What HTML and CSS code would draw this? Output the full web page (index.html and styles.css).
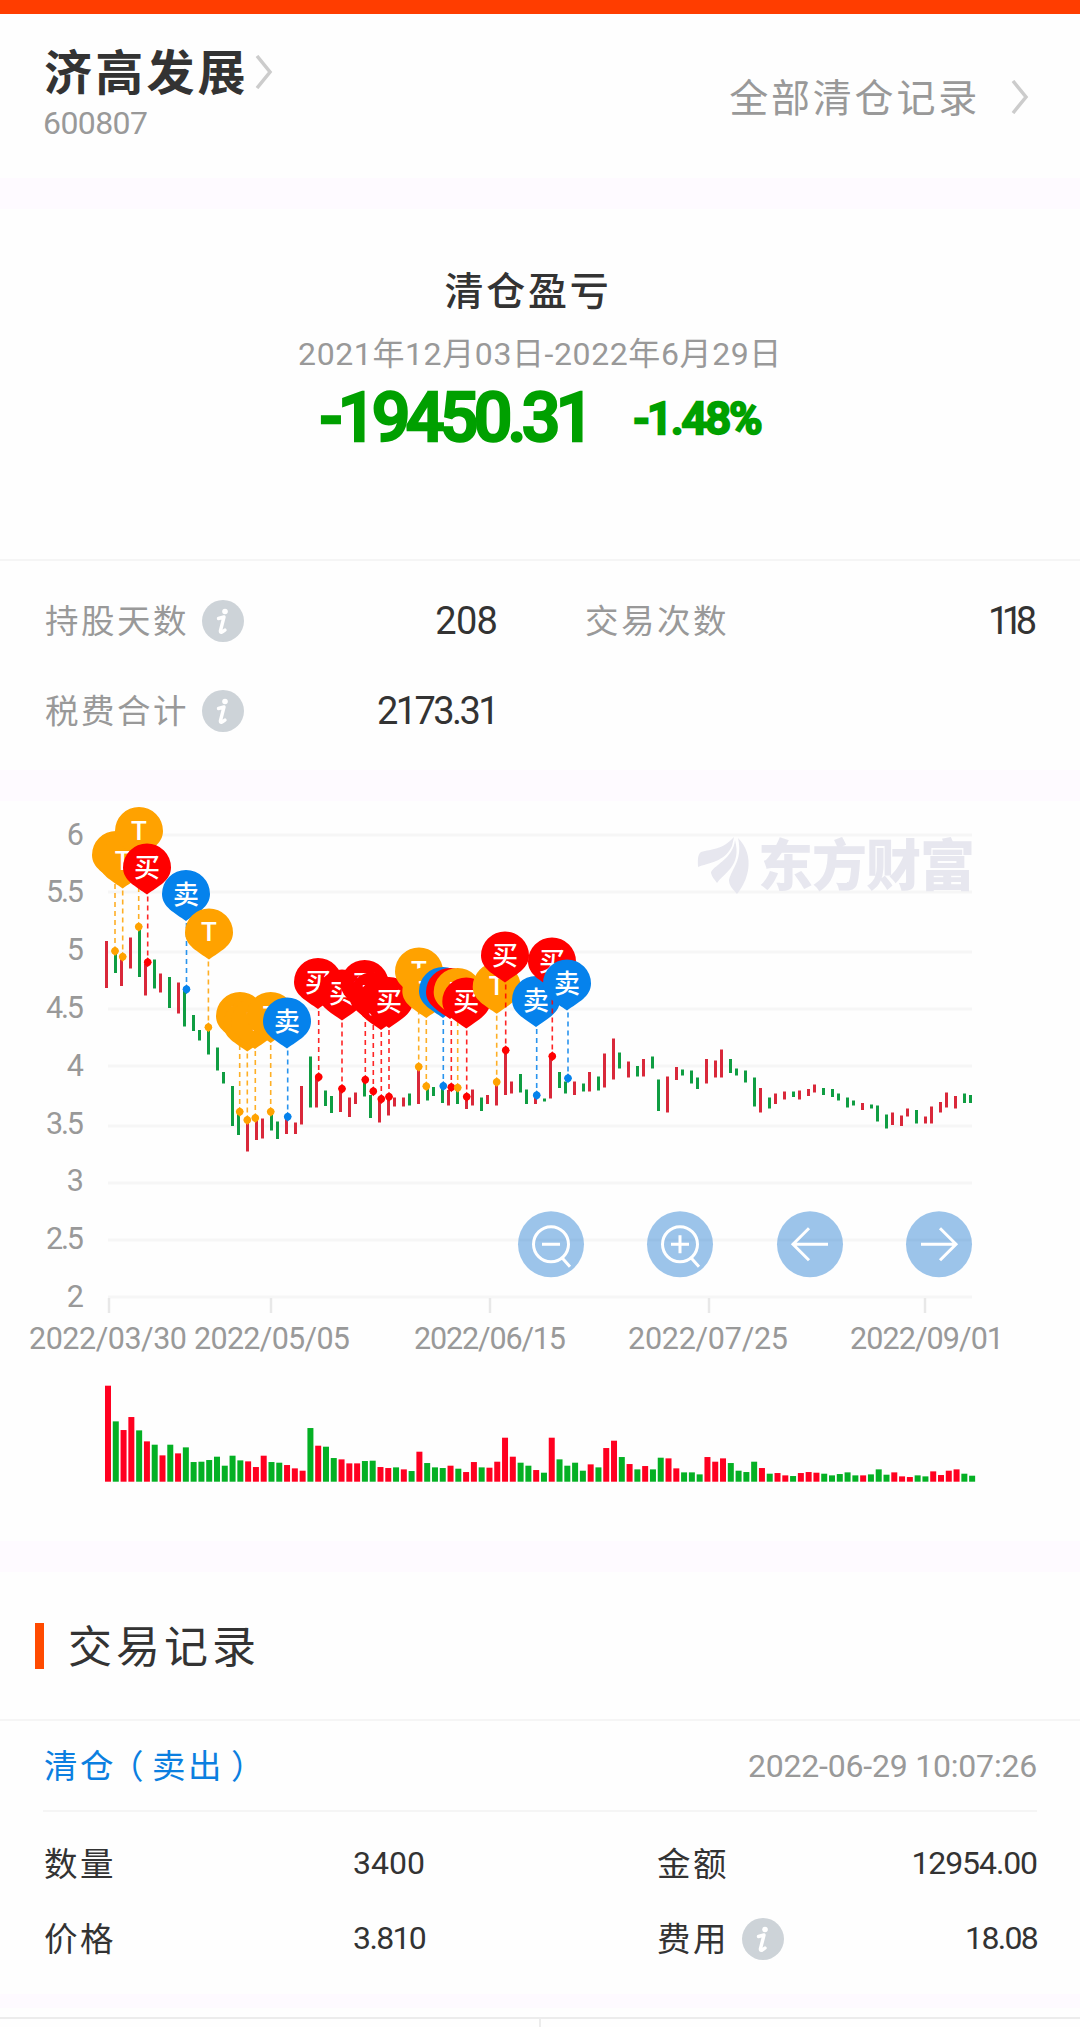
FILE: index.html
```html
<!DOCTYPE html>
<html lang="zh-CN">
<head>
    <meta charset="UTF-8">
    <meta name="viewport" content="width=device-width, initial-scale=1.0">
    <title>清仓记录</title>
    <link rel="stylesheet" href="styles.css">
</head>
<body>
    <div class="top-bar"></div>

    <!-- Stock header -->
    <header class="header">
        <div class="stock">
            <div class="stock-name"><span>济高发展</span>
                <svg class="chevron" viewBox="0 0 18 34"><path d="M2 1 L15 17 L2 33"/></svg>
            </div>
            <div class="stock-code">600807</div>
        </div>
        <div class="all-records"><span>全部清仓记录</span>
            <svg class="chevron" viewBox="0 0 18 34"><path d="M2 1 L15 17 L2 33"/></svg>
        </div>
    </header>

    <div class="band"></div>

    <!-- Profit summary -->
    <section class="profit">
        <h2 class="profit-title">清仓盈亏</h2>
        <div class="profit-range">2021年12月03日-2022年6月29日</div>
        <div class="profit-value">
            <span class="amount">-19450.31</span>
            <span class="percent">-1.48%</span>
        </div>
    </section>

    <section class="stats">
        <div class="stat">
            <span class="label">持股天数</span>
            <svg class="info" viewBox="0 0 42 42"><circle cx="21" cy="21" r="21"/><path d="M16.5 18.5 L22 17 L18.4 31 Q18.3 34 23 30"/><circle class="dot" cx="23" cy="11.5" r="2.8"/></svg>
            <span class="value">208</span>
        </div>
        <div class="stat">
            <span class="label">交易次数</span>
            <span class="value ones">118</span>
        </div>
        <div class="stat">
            <span class="label">税费合计</span>
            <svg class="info" viewBox="0 0 42 42"><circle cx="21" cy="21" r="21"/><path d="M16.5 18.5 L22 17 L18.4 31 Q18.3 34 23 30"/><circle class="dot" cx="23" cy="11.5" r="2.8"/></svg>
            <span class="value tax">2173.31</span>
        </div>
    </section>

    <div class="band"></div>

    <!-- Chart -->
    <section class="chart">
        <svg id="chart" width="1080" height="740" viewBox="0 801 1080 740"></svg>
    </section>

    <div class="band"></div>

    <!-- Trade records -->
    <section class="records">
        <h2 class="records-title"><span>交易记录</span></h2>
        <div class="record">
            <div class="record-head">
                <span class="record-type">清仓<span class="open">（</span>卖出<span class="close">）</span></span>
                <span class="record-time">2022-06-29 10:07:26</span>
            </div>
            <div class="record-body">
                <div class="cell">
                    <span class="label">数量</span>
                    <span class="value">3400</span>
                </div>
                <div class="cell">
                    <span class="label">金额</span>
                    <span class="value money">12954.00</span>
                </div>
                <div class="cell">
                    <span class="label">价格</span>
                    <span class="value price">3.810</span>
                </div>
                <div class="cell">
                    <span class="label">费用</span>
                    <svg class="info" viewBox="0 0 42 42"><circle cx="21" cy="21" r="21"/><path d="M16.5 18.5 L22 17 L18.4 31 Q18.3 34 23 30"/><circle class="dot" cx="23" cy="11.5" r="2.8"/></svg>
                    <span class="value fee">18.08</span>
                </div>
            </div>
        </div>
    </section>

    <div class="band band-small"></div>

    <footer class="tabs">
        <div class="tab"></div>
        <div class="tab"></div>
    </footer>

    <script src="chart.js"></script>
</body>
</html>
```

FILE: styles.css
```css
* {
    box-sizing: border-box;
}

body {
    margin: 0;
    width: 1080px;
    height: 2027px;
    overflow: hidden;
    background: #fefefe;
    color: #333;
    font-family: Roboto, "Noto Sans CJK SC", sans-serif;
}

h2 {
    margin: 0;
    font-weight: 400;
}

.top-bar {
    height: 14px;
    background: #ff3d00;
}

.band {
    height: 31px;
    background: #fefaff;
}

.band-small {
    height: 14px;
}

.chevron {
    width: 18px;
    height: 34px;
    fill: none;
    stroke: #ccc;
    stroke-width: 3.5;
}

.info {
    width: 42px;
    height: 42px;
    margin-left: 13px;
    fill: #cdd3d8;
}

.info path {
    fill: none;
    stroke: #fff;
    stroke-width: 3.4;
    stroke-linecap: round;
    stroke-linejoin: round;
}

.info .dot {
    fill: #fff;
}

/* Header */
.header {
    height: 164px;
    padding: 30px 51px 0 44px;
    display: flex;
    justify-content: space-between;
}

.stock-name {
    display: flex;
    align-items: center;
    height: 56px;
    font-size: 48px;
    font-weight: 700;
    letter-spacing: 3.2px;
}

.stock-name span {
    padding-bottom: 6px;
}

.stock-name .chevron {
    margin-left: 6px;
}

.stock-code {
    height: 46px;
    line-height: 46px;
    font-size: 32px;
    margin-left: -1px;
    letter-spacing: -0.6px;
    color: #999;
}

.all-records {
    display: flex;
    align-items: center;
    height: 106px;
    font-size: 39px;
    letter-spacing: 2.8px;
    color: #999;
}

.all-records span {
    padding-bottom: 5px;
}

.all-records .chevron {
    margin-left: 31px;
}

/* Profit */
.profit {
    height: 352px;
    padding-top: 57px;
    text-align: center;
    border-bottom: 2px solid #f5f5f5;
}

.profit-title {
    height: 52px;
    line-height: 52px;
    padding-right: 24px;
    font-size: 39px;
    font-weight: 500;
    letter-spacing: 2.8px;
}

.profit-range {
    height: 50px;
    line-height: 50px;
    margin-top: 11px;
    font-size: 32px;
    letter-spacing: 0.6px;
    color: #999;
}

.profit-value {
    display: flex;
    justify-content: center;
    align-items: center;
    gap: 44px;
    height: 78px;
    color: #00a000;
    font-weight: 500;
    -webkit-text-stroke: 2.5px #00a000;
    stroke-linejoin: round;
}

.amount {
    font-size: 68px;
    letter-spacing: -4.7px;
}

.percent {
    font-size: 45px;
    letter-spacing: -1.8px;
}

/* Stats */
.stats {
    height: 209px;
    padding: 15px 43px 0 45px;
    display: grid;
    grid-template-columns: 452px 452px;
    justify-content: space-between;
    grid-auto-rows: 90px;
}

.stat {
    display: flex;
    align-items: center;
}

.stat .label,
.cell .label {
    font-size: 33.5px;
    letter-spacing: 2.5px;
    padding-bottom: 5px;
}

.stat .label {
    color: #999;
}

.value {
    margin-left: auto;
}

.stat .value {
    font-size: 38px;
    letter-spacing: -0.8px;
}

.stat .ones {
    letter-spacing: -7.5px;
    margin-right: 7.5px;
}

.stat .tax {
    letter-spacing: -2.6px;
}

/* Chart */
.chart {
    height: 740px;
}

.chart svg {
    display: block;
}

.grid {
    stroke: #f6f6f6;
    stroke-width: 3;
}

.tick {
    stroke: #e8e8e8;
    stroke-width: 2.5;
}

.axis {
    font-size: 30.5px;
    fill: #999;
}

.pin-text {
    font-size: 26px;
    font-weight: 500;
    fill: #fff;
    text-anchor: middle;
}

.lead {
    stroke-width: 1.6;
    stroke-dasharray: 5 4;
    opacity: 0.85;
}

.watermark {
    fill: #e7e7ef;
}

.watermark text {
    font-size: 55px;
    font-weight: 900;
}

.tool circle {
    fill: #0a6dcc;
    opacity: 0.4;
}

.tool path {
    fill: none;
    stroke: #fff;
    stroke-width: 3;
}

/* Records */
.records-title {
    height: 149px;
    display: flex;
    align-items: center;
    padding-left: 35px;
    font-size: 44px;
    letter-spacing: 4px;
    border-bottom: 2px solid #f5f5f5;
}

.records-title span {
    padding-bottom: 4px;
}

.records-title::before {
    content: "";
    width: 9px;
    height: 46px;
    margin-right: 24px;
    background: #ff4a00;
}

.record {
    height: 273px;
    padding: 0 43px;
}

.record-head {
    height: 91px;
    display: flex;
    justify-content: space-between;
    align-items: center;
    border-bottom: 2px solid #f5f5f5;
    font-size: 32px;
}

.record-type {
    padding: 0 0 4px 1px;
    font-size: 33.5px;
    letter-spacing: 2.5px;
    color: #0b7fe0;
}

/* full-width brackets sit away from the words they enclose */
.open {
    margin: 0 6px 0 -6px;
}

.close {
    margin-left: 7px;
}

.record-time {
    letter-spacing: -0.2px;
    color: #999;
}

.record-body {
    padding-top: 14px;
    display: grid;
    grid-template-columns: 382px 381px;
    justify-content: space-between;
    grid-auto-rows: 75px;
}

.cell {
    display: flex;
    align-items: center;
    font-size: 32px;
}

.cell .label {
    padding-left: 1px;
}

.cell .value {
    padding-bottom: 2px;
}

.cell .money {
    letter-spacing: -1.1px;
}

.cell .price,
.cell .fee {
    letter-spacing: -1.7px;
}

/* Bottom tabs */
.tabs {
    display: flex;
    margin-top: 9px;
    height: 11px;
    border-top: 2px solid #ececec;
}

.tab {
    flex: 1;
}

.tab + .tab {
    border-left: 2px solid #ececec;
}
```

FILE: chart.js
```javascript
const chart = document.getElementById('chart');
const RED = '#d9283a', GREEN = '#0f9d42';
let out = '';

// grid and y axis
const rows = [[835, '6'], [892, '5.5'], [952, '5'], [1009, '4.5'], [1066, '4'], [1126, '3.5'], [1183, '3'], [1240, '2.5'], [1297, '2']];
rows.forEach(([y, label], i) => {
    out += `<line class="grid" x1="108" x2="972" y1="${y}" y2="${y}"/>`;
    out += `<text class="axis" x="84" y="${834 + i * 57.8 + 10.5}" text-anchor="end"${label.length > 1 ? ' textLength="38" lengthAdjust="spacing"' : ''}>${label}</text>`;
});

// x axis
const dates = [[109, 29, 158, '2022/03/30'], [271, 194, 156, '2022/05/05'], [490, 414, 152, '2022/06/15'], [709, 628, 160, '2022/07/25'], [925, 850, 154, '2022/09/01']];
dates.forEach(([tick, x, w, label]) => {
    out += `<line class="tick" x1="${tick}" x2="${tick}" y1="1298" y2="1313"/>`;
    out += `<text class="axis" x="${x}" y="1349" textLength="${w}" lengthAdjust="spacing">${label}</text>`;
});

// watermark
out += `<g class="watermark">
    <path d="M734 837 C722 850 712 849 701 852 C697 855 698 862 698 867 C708 863 725 862 732 846 Z"/>
    <path d="M735 840 C733 858 716 864 711 872 C711 876 715 880 717 883 C724 873 742 866 735 840 Z"/>
    <path d="M738 838 C743 860 732 868 729 880 C729 886 733 889 737 894 C748 881 756 856 738 838 Z"/>
    <text x="758" y="885" textLength="217" lengthAdjust="spacing">东方财富</text>
</g>`;

// candles: x, high, low, up/down
const candles = [
    [106.3,941,988,1],[115.3,951,973,0],[121.3,958,986,1],[130.3,937.5,968.5,1],[139.3,927,977,0],[145.3,964,995.5,1],
    [154.3,959.5,988.5,0],[160.3,973.5,992.5,1],[169.3,977,1008,0],[178.3,982.5,1013.5,1],[184.3,991,1026.5,0],[193.3,1015,1031,0],
    [199.3,1030,1040.5,0],[208.3,1028,1054.5,0],[217.3,1047.5,1070.5,0],[223.3,1072,1083.5,0],[232.3,1086,1126,0],[238.3,1113,1135,0],
    [247.3,1121,1151.5,1],[256.3,1119,1140,1],[262.3,1118.5,1138.5,1],[271.3,1113,1130.5,0],[277.3,1121.5,1139,0],[286.3,1118,1134,1],
    [295.3,1122.5,1134,1],[301.3,1086,1124.5,1],[310.3,1056.5,1107.5,0],[316.3,1078,1107.5,1],[325.3,1090.5,1106,0],[331.3,1096,1113,0],
    [340.3,1090,1112,1],[349.3,1097.5,1117,1],[355.3,1092.5,1104,1],[364.3,1081,1096.5,0],[370.3,1095,1118,0],[379.3,1100,1122.5,1],
    [388.3,1098,1115.5,1],[394.3,1097.5,1106.5,1],[403.3,1097.5,1106.5,1],[409.3,1093.5,1105.5,0],[418.3,1070,1104,1],[427.3,1088,1100.5,0],
    [433.3,1087,1096,0],[442.3,1087,1103,0],[448.3,1090,1105.5,1],[457.3,1089,1104,0],[466.3,1098,1109,1],[472.3,1089.5,1105.5,1],
    [481.3,1097.5,1111,0],[487.3,1095,1104,1],[496.3,1085,1105.5,1],[505.3,1052,1095,1],[511.3,1081.5,1093.5,1],[520.3,1074,1092.5,0],
    [526.3,1089.5,1104,0],[535.3,1098,1104,1],[544.3,1098.5,1101.5,0],[550.3,1058,1098.5,1],[559.3,1072,1088,0],[565.3,1081.5,1093.5,0],
    [574.3,1081.5,1095,1],[583.3,1083.5,1091.5,0],[589.3,1072,1091.5,1],[598.3,1076.5,1090.5,0],[604.3,1053.5,1087.5,1],[613.3,1038.5,1079.5,1],
    [619.3,1052.5,1068.5,0],[628.3,1061.5,1077.5,1],[637.3,1066,1076.5,0],[643.3,1059,1076.5,1],[652.3,1056.5,1068.5,0],[658.3,1079.5,1111,0],
    [667.3,1076.5,1112.5,1],[676.3,1067,1080,1],[682.3,1069.5,1075.5,0],[691.3,1070.5,1083.5,0],[697.3,1077.5,1089,0],[706.3,1059,1083.5,1],
    [715.3,1060.5,1077.5,1],[721.3,1049.5,1077.5,1],[730.3,1059,1073,0],[736.3,1068.5,1075.5,0],[745.3,1070.5,1082.5,0],[754.3,1077.5,1106.5,0],
    [760.3,1088,1112.5,1],[769.3,1097.5,1108.5,0],[775.3,1093.5,1104,1],[784.3,1091.5,1099.5,1],[793.3,1091.5,1097,0],[799.3,1090.5,1099.5,1],
    [808.3,1089,1096,1],[814.3,1084.5,1092.5,1],[823.3,1088,1095,0],[832.3,1089,1097,0],[838.3,1093.5,1100.5,0],[847.3,1097.5,1107.5,0],
    [853.3,1100.5,1105.5,0],[862.3,1103,1110,1],[871.3,1104.5,1108.5,0],[877.3,1105.5,1121.5,0],[886.3,1114.5,1128.5,0],[892.3,1112.5,1125,1],
    [901.3,1115.5,1126,1],[907.3,1108.5,1116.5,1],[916.3,1110,1123.5,0],[925.3,1116.5,1123.5,1],[931.3,1106.5,1123.5,1],[940.3,1102,1112.5,1],
    [946.3,1092.5,1107.5,1],[955.3,1096,1108.5,1],[964.3,1093.5,1103,0],[970.3,1095,1103,0]
];
candles.forEach(([x, y1, y2, up]) => {
    out += `<rect x="${x - 1.3}" y="${y1}" width="3" height="${y2 - y1}" fill="${up ? RED : GREEN}"/>`;
});

// trade pins: pin x, pin y, dot x, dot y, type
const colors = { T: '#ffa200', '买': '#ff0000', '卖': '#0582ec' };
const pins = [
    [116,855,115,951,'T'],[122.7,861.5,122.7,956.7,'T'],[139,831,138.7,926.7,'T'],[147,867.5,147.7,962.3,'买'],
    [186,894,186.5,989.3,'卖'],[209,932.5,208.4,1027.3,'T'],[240,1016,239.7,1111.7,'T'],[247.3,1024.5,247.3,1120,'T'],
    [255,1022,255.3,1118,'T'],[270.7,1016,270.7,1111.7,'T'],[287,1021.5,287.7,1116.7,'卖'],[318,982,318.7,1077,'买'],
    [342,993.5,342,1088.7,'买'],[364.7,984,365.3,1079.7,'买'],[373.3,996,373.3,1091.3,'买'],[381,1003,381.3,1099,'买'],
    [389,1001,389,1096.7,'买'],[419,971.5,418.7,1066.7,'T'],[426.3,991,426.3,1086.3,'T'],[443,991,443.3,1086,'卖'],
    [450,992,451.3,1087.3,'买'],[457.7,992,457.7,1087.7,'T'],[466.3,1001.5,466.7,1096.7,'买'],[496.7,986.7,496.7,1082,'T'],
    [505,955.5,505.7,1050.3,'买'],[536,1000,536.7,1095.3,'卖'],[552,961.5,552.3,1056.3,'买'],[567,983.5,568,1078.3,'卖']
];
pins.forEach(([x, y, dx, dy, type]) => {
    const c = colors[type];
    out += `<line class="lead" x1="${dx}" x2="${dx}" y1="${y + 29}" y2="${dy - 4}" stroke="${c}"/>`;
    out += `<path d="M${dx} ${dy - 5} L${dx + 4} ${dy} L${dx} ${dy + 5} L${dx - 4} ${dy} Z" fill="${c}"/><circle cx="${dx}" cy="${dy}" r="3.7" fill="${c}"/>`;
    out += `<path transform="translate(${x} ${y})" d="M-24 0 A24 24 0 0 1 24 0 C24 13 11 19 0 27 C-11 19 -24 13 -24 0 Z" fill="${c}"/>`;
    out += `<text class="pin-text" x="${x}" y="${y + (type === 'T' ? 8.5 : 9.5)}">${type}</text>`;
});

// zoom and pan buttons
const lens = 'M-17.5 0 A17.5 17.5 0 1 0 17.5 0 A17.5 17.5 0 1 0 -17.5 0 M11 13.5 L19 22.5';
const tools = [
    [551, lens + ' M-9 0 H9'],
    [680, lens + ' M-9 0 H9 M0 -9 V9'],
    [810, 'M18 0 H-17 M-1 -16 L-17 0 L-1 16'],
    [939, 'M-18 0 H17 M1 -16 L17 0 L1 16']
];
tools.forEach(([x, d]) => {
    out += `<g class="tool" transform="translate(${x} 1244.3)"><circle r="33"/><path d="${d}"/></g>`;
});

// volume, heights in thirds of a pixel
const volume = 'R288 G181 R155 R194 G154 R121 G111 R79 G111 R85 G103 G59 G60 G65 G75 G48 G78 G64 R61 R44 R78 G59 G57 R50 R40 R33 ' +
    'G161 R108 G105 G71 R67 R55 R55 G62 G63 R44 R41 G43 R37 G32 R90 G56 G43 G41 R48 G39 R29 R59 G43 R42 R60 R132 R75 G57 G48 R35 ' +
    'G27 R132 G67 G48 G57 G33 R52 G43 R101 R123 G74 R53 G37 R47 G37 G72 R70 R40 G28 G28 G22 R74 R60 R70 G56 G33 G29 G60 R41 ' +
    'G24 R26 R19 G17 R26 R29 R27 G24 G19 G23 G28 G19 R19 G22 G37 G21 R28 R16 R14 G19 G16 R31 R20 R33 R37 G24 G18';
volume.split(' ').forEach((v, i) => {
    const h = v.slice(1) / 3;
    out += `<rect x="${105 + i * 7.785}" y="${1481.7 - h}" width="6" height="${h}" fill="${v[0] === 'R' ? '#ff0020' : '#04b024'}"/>`;
});

chart.innerHTML = out;
```
